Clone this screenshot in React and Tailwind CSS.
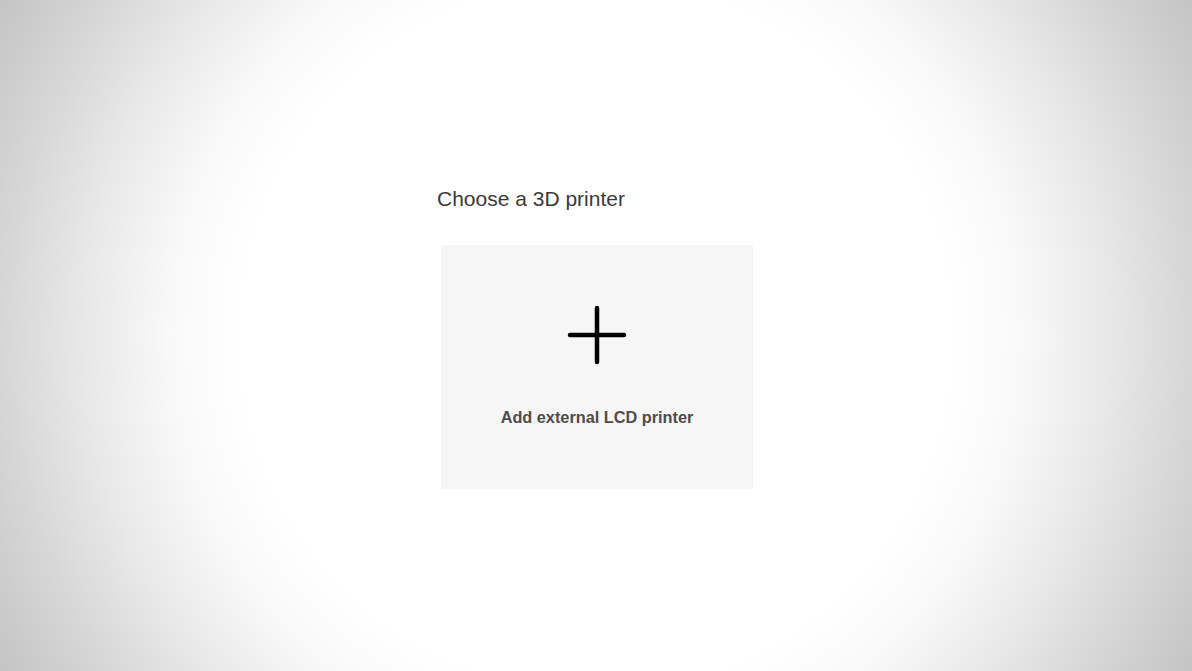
import React from 'react';

function PlusIcon() {
    return (
        <svg width="60" height="60" viewBox="0 0 60 60" fill="none">
            <path d="M30 3v54M3 30h54" stroke="#000" strokeWidth="4.5" strokeLinecap="round" />
        </svg>
    );
}

export default function App() {
    return (
        <div
            className="min-h-screen w-full flex justify-center bg-[radial-gradient(circle_at_50%_50%,#ffffff_0%,#ffffff_52%,#f9f9f9_62%,#e8e8e8_75%,#d6d6d6_87%,#c4c4c4_100%)]"
            style={{ fontFamily: '"Liberation Sans", Arial, sans-serif' }}
        >
            <div className="w-[318px] pt-[185px]">
                <h1 className="text-[21px] leading-[27px] text-[#3a3a3a] font-normal whitespace-nowrap">
                    Choose a 3D printer
                </h1>
                <button className="mt-[33px] ml-1 w-[312px] h-[244px] bg-[#f6f6f6] flex flex-col items-center pt-[60px] cursor-pointer">
                    <PlusIcon />
                    <span className="mt-[42px] text-[16.3px] leading-[20px] font-bold text-[#4d4d4d] whitespace-nowrap">
                        Add external LCD printer
                    </span>
                </button>
            </div>
        </div>
    );
}
